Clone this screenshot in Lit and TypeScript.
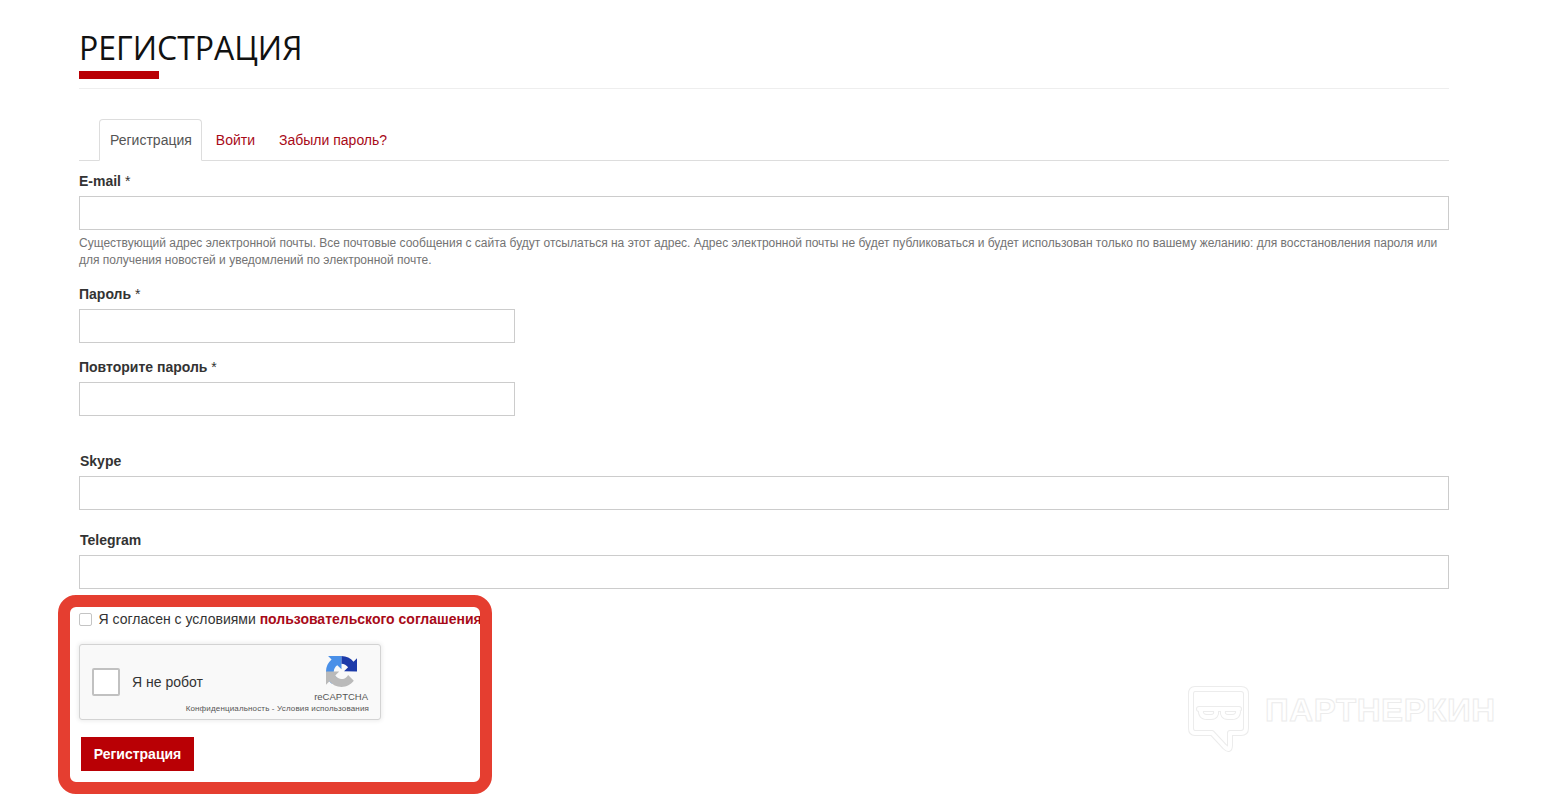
import { LitElement, html, css, svg } from "lit";
import { customElement } from "lit/decorators.js";

const BUBBLE = "M7 3 H53 Q58 3 58 8 V42 Q58 47 53 47 H42 V59 Q42 66 37 61 L24 47 H7 Q3 47 3 42 V8 Q3 3 7 3 Z";
const GLASSES = "M11 23 H51 M13 23 Q12 31 19 31 H23 Q29 31 28 24 M35 24 Q34 31 40 31 H44 Q51 31 50 23";

@customElement("app-root")
export class AppRoot extends LitElement {
  static styles = css`
    :host { display: block; position: relative; height: 803px; overflow: hidden; background: #fff; font-family: "Liberation Sans", Arial, sans-serif; font-size: 14px; color: #333; }
    .page { padding: 0 96px 0 79px; }
    h1 { margin: 0; padding-top: 26px; height: 45px; font: 400 32px/43px "Open Sans", sans-serif; color: #111; }
    .titlebar { width: 80px; height: 8px; background: #b90005; }
    .rule { height: 1px; background: #eee; margin-top: 9px; }
    .tabs { display: flex; margin-top: 30px; height: 42px; padding-left: 20px; border-bottom: 1px solid #ddd; box-sizing: border-box; }
    .tab { padding: 0 10px; line-height: 43px; color: #a80a18; margin-right: 4px; }
    .tab.active { height: 42px; box-sizing: border-box; padding-right: 9px; line-height: 40px; color: #555; background: #fff; border: 1px solid #ddd; border-bottom-color: #fff; border-radius: 4px 4px 0 0; }
    label { display: block; font-weight: 700; line-height: 20px; color: #333; }
    label span { font-weight: 400; }
    .email { margin-top: 10px; }
    input[type="text"] { display: block; box-sizing: border-box; width: 100%; height: 34px; margin: 5px 0 0; border: 1px solid #ccc; background: #fff; padding: 0; outline: none; }
    input.short { width: 436px; }
    .help { margin: 5px 0 0; font-size: 12px; line-height: 17px; color: #737373; }
    .pass { margin-top: 15px; }
    .repeat { margin-top: 14px; }
    .skype { margin-top: 35px; }
    .telegram { margin-top: 20px; }
    .indented { padding-left: 1px; }
    .agree { display: flex; align-items: center; margin-top: 20px; height: 20px; white-space: nowrap; }
    .agree i { display: block; box-sizing: border-box; width: 13px; height: 13px; border: 1px solid #c4c4c4; border-radius: 2px; margin-right: 6.5px; }
    .agree b { color: #a80a18; }
    .captcha { position: relative; box-sizing: border-box; width: 302px; height: 76px; margin-top: 15px; background: #f9f9f9; border: 1px solid #d3d3d3; border-radius: 3px; box-shadow: 0 0 4px 1px rgba(0,0,0,.08); display: flex; align-items: center; }
    .box { box-sizing: border-box; width: 28px; height: 28px; margin-left: 12px; border: 2px solid #c1c1c1; border-radius: 2px; background: #fff; }
    .robot { margin-left: 12px; font-size: 14px; color: #333; }
    .logo { position: absolute; left: 246px; top: 11px; width: 31px; height: 31px; }
    .rc { position: absolute; right: 12px; top: 46px; font-size: 9.5px; line-height: 12px; color: #555; }
    .terms { position: absolute; right: 11px; top: 59px; font-size: 8px; line-height: 10px; letter-spacing: .15px; color: #555; white-space: nowrap; }
    .submit { display: block; margin: 17px 0 0 2px; width: 113px; height: 34px; border: 0; background: #b90005; color: #fff; font: 700 14px "Liberation Sans", Arial, sans-serif; padding: 0; }
    .mark { position: absolute; left: 58px; top: 595px; width: 434px; height: 199px; box-sizing: border-box; border: 12px solid #e53e30; border-radius: 18px; pointer-events: none; }
    .wm { position: absolute; left: 1188px; top: 686px; width: 312px; height: 70px; pointer-events: none; }
    .wm-text { position: absolute; left: 77px; top: 6px; font: 700 32px/36px "Liberation Sans", Arial, sans-serif; letter-spacing: .6px; color: #fff; -webkit-text-stroke: 1px #ececec; white-space: nowrap; transform: scaleX(1.03); transform-origin: left; }
  `;

  private field(cls: string, name: string, req: boolean, short: boolean) {
    return html`<label class=${cls}>${name}${req ? html` <span>*</span>` : ""}</label>
      <input type="text" class=${short ? "short" : ""} />`;
  }

  render() {
    return html`
      <div class="page">
        <h1>РЕГИСТРАЦИЯ</h1>
        <div class="titlebar"></div>
        <div class="rule"></div>
        <div class="tabs">
          <div class="tab active">Регистрация</div>
          <div class="tab">Войти</div>
          <div class="tab">Забыли пароль?</div>
        </div>
        ${this.field("email", "E-mail", true, false)}
        <p class="help">Существующий адрес электронной почты. Все почтовые сообщения с сайта будут отсылаться на этот адрес. Адрес электронной почты не будет публиковаться и будет использован только по вашему желанию: для восстановления пароля или для получения новостей и уведомлений по электронной почте.</p>
        ${this.field("pass", "Пароль", true, true)}
        ${this.field("repeat", "Повторите пароль", true, true)}
        ${this.field("skype indented", "Skype", false, false)}
        ${this.field("telegram indented", "Telegram", false, false)}
        <div class="agree"><i></i>Я согласен с условиями&nbsp;<b>пользовательского соглашения</b></div>
        <div class="captcha">
          <div class="box"></div>
          <div class="robot">Я не робот</div>
          <svg class="logo" viewBox="0 0 64 64">
            <path fill="#4a90e8" d="M32 0 H4.3 L11.5 7.2 C4.3 13 0 22 0 32 C0 42 5 52 12.4 57.4 L24.2 45.7 A15.5 15.5 0 0 1 18.9 40.9 C17.3 38.9 16 36 16 32 C16 31.5 16.1 31.1 16.2 30.9 C16.6 25.9 19.3 21.6 23.3 19.1 L32 27.4 Z"/>
            <path fill="#1c3aa9" d="M64 32 V4.7 L56.8 11.8 C50.9 4.7 42 .1 32 .1 L32 16.2 C37 16.6 43 19.4 45.6 23.4 L37.3 31.7 Z"/>
            <path fill="#bababa" d="M0 32 V59.2 L7.2 52 C13 59.2 22 63.8 32 63.8 C42.4 63.8 51.6 58.8 57.4 51.2 L45.7 39.3 A15.5 15.5 0 0 1 40.9 44.7 C38.9 46.3 36 47.6 32 47.6 C31.5 47.6 31.1 47.5 30.8 47.4 C25.8 47 21.5 44.3 19 40.3 L27.3 32 Z"/>
          </svg>
          <div class="rc">reCAPTCHA</div>
          <div class="terms">Конфиденциальность - Условия использования</div>
        </div>
        <button class="submit">Регистрация</button>
      </div>
      <div class="mark"></div>
      <div class="wm">
        <svg width="64" height="70" viewBox="0 0 64 70" fill="none" stroke-linejoin="round" stroke-linecap="round">
          ${[BUBBLE, GLASSES].map(
            (d) => svg`<path d=${d} stroke="#ececec" stroke-width="6"/><path d=${d} stroke="#fff" stroke-width="4"/>`
          )}
        </svg>
        <div class="wm-text">ПАРТНЕРКИН</div>
      </div>
    `;
  }
}
